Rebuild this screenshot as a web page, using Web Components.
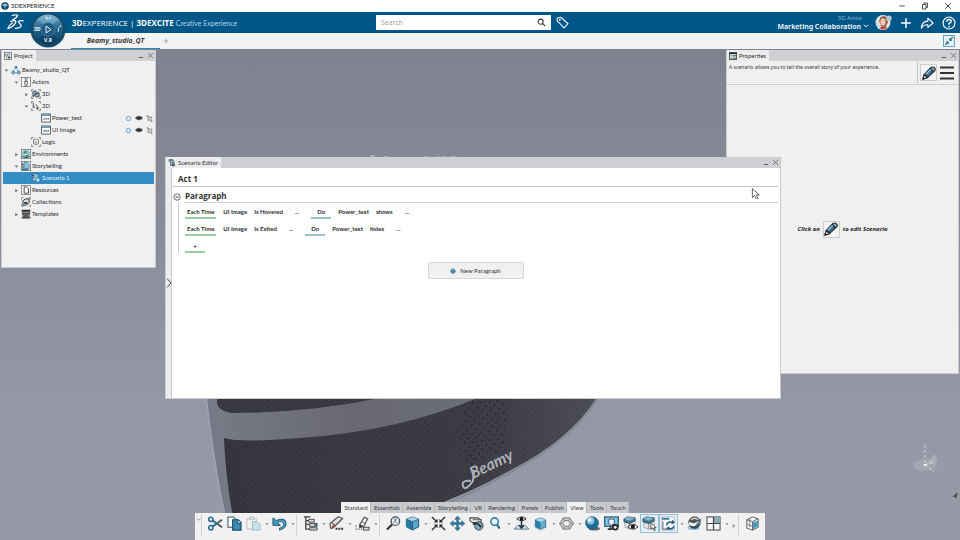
<!DOCTYPE html>
<html lang="en">
<head>
<meta charset="utf-8">
<title>3DEXPERIENCE</title>
<style>
html,body{margin:0;height:100%}
body{font-family:Lato,"Open Sans",sans-serif;font-size:6px;line-height:8px;color:#303133;overflow:hidden}
</style>
</head>
<body>
<studio-app></studio-app>
<script>
const ICONS = {
globe:'<circle cx="8" cy="8" r="7.5" fill="#0c3c5c"/><path d="M2 6Q8 1 14 6L12 9H4Z" fill="#5ba7d0"/><path d="M5 9l3 5 3-5z" fill="#2f7aa8"/><path d="M4 5h8M8 2v11" stroke="#d9eefa" stroke-width=".8"/>',
ds:'<g fill="none" stroke="#fff" stroke-width="1.2" stroke-linecap="round" stroke-linejoin="round"><path d="M5 1.200Q9.500 .2 10 1.300Q9.500 3.500 5.500 5.500M3.500 7Q8.800 5 8.200 7.800Q6.500 12 .8 13.800Q1.800 10.500 5 8.500"/><path d="M15.200 6.500Q11.200 5.600 10.700 7.300Q11.300 8.300 13.300 10.500Q14 13 8 13.500"/></g>',
search:'<circle cx="6.500" cy="6.500" r="4.500" fill="none" stroke="#333" stroke-width="1.800"/><path d="M10 10l4.500 4.500" stroke="#333" stroke-width="2.200"/>',
tag:'<path d="M1.500 6V2.500L6 1.500 14.800 9.500 10 14.500 1.500 6Z" fill="none" stroke="#e8f4fb" stroke-width="1.400" stroke-linejoin="round"/><circle cx="4.700" cy="4.700" r="1.200" fill="#e8f4fb"/>',
plus:'<path d="M8 1.500v13M1.500 8h13" stroke="currentColor" stroke-width="2"/>',
share:'<path d="M1.500 14Q2 6 9 5.800V2.500L15 8l-6 5V10Q4 9.500 1.500 14Z" fill="none" stroke="#fff" stroke-width="1.300" stroke-linejoin="round"/>',
help:'<circle cx="8" cy="8" r="6.800" fill="none" stroke="#fff" stroke-width="1.300"/><path d="M5.500 6.500Q5.500 4 8 4T10.500 6.300Q10.500 7.500 8 8.500V10" fill="none" stroke="#fff" stroke-width="1.600"/><circle cx="8" cy="12" r="1" fill="#fff"/>',
avatar:'<circle cx="7.500" cy="8" r="7" fill="#e8e4e2"/><path d="M4 7Q4 2 8.500 2T12 8L10 12H6Z" fill="#8a5646"/><ellipse cx="7.500" cy="7.500" rx="2.500" ry="3.400" fill="#f1c6b0"/><path d="M4 13.500Q7.500 10 11.500 12.800Q8 16 4 13.500" fill="#c8423a"/><path d="M2 4L5 14H3Q0 9 2 4" fill="#c5dce0"/><circle cx="13" cy="4" r="2.700" fill="#b9c7d2"/>',
min:'<path d="M2.500 8h11" stroke="currentColor" stroke-width="1.500"/>',
pmin:'<path d="M2 12h12" stroke="currentColor" stroke-width="2.500"/>',
restore:'<path d="M3 5h7v9H3zM6 5V2h7v9h-3" fill="none" stroke="currentColor" stroke-width="1.500"/>',
close:'<path d="M2.500 2.500l11 11m0-11l-11 11" stroke="currentColor" stroke-width="1.700"/>',
chev:'<path d="M2 5l6 5 6-5" fill="none" stroke="currentColor" stroke-width="2.200"/>',
right:'<path d="M5 1l6 7-6 7" fill="none" stroke="currentColor" stroke-width="1.400"/>',
down:'<path d="M2 5h12L8 12Z" fill="currentColor"/>',
play:'<path d="M4 2v12l9-6Z" fill="currentColor"/>',
shrink:'<rect x=".75" y=".75" width="14.500" height="14.500" fill="#e9f2f8" stroke="#5c9bc0" stroke-width="1.300"/><path d="M13 3L9.500 6.500M3 13l3.500-3.500" stroke="#155780" stroke-width="1.600"/><path d="M8.500 3.500v4h4zM3.500 8.500h4v4z" fill="#155780"/>',
project:'<rect x="1" y="1" width="14" height="14" fill="#fff" stroke="#555" stroke-width="1.300"/><path d="M3 4h4v4H3zM5 8v4h3" fill="none" stroke="#333"/><rect x="8" y="9" width="5" height="4" fill="#4a4a4a"/><path d="M8 4h5M8 6h5" stroke="#287fae" stroke-width="1.300"/>',
props:'<rect x=".7" y="1" width="14.600" height="14" fill="#e3eeee" stroke="#222" stroke-width="1.400"/><path d="M1 3h14" stroke="#222" stroke-width="2.500"/><path d="M3 7h2M3 10h2M3 13h2" stroke="#267b6c" stroke-width="1.800"/><path d="M7 7h7M7 10h7M7 13h7" stroke="#3c4444" stroke-width="1.300"/>',
script:'<path d="M2 1h8v3h2v9H5V5H2Z" fill="#a9c3ce" stroke="#3c4a53" stroke-width="1.200"/><path d="M4 3h5M7 7h4M7 10h4" stroke="#3c4a53" stroke-width="1.300"/><circle cx="11" cy="12" r="2.500" fill="#4f86a3" stroke="#333"/>',
root:'<path d="M8 3L3 12h10Z" fill="none" stroke="#6997b0" stroke-width="1"/><circle cx="8" cy="3.500" r="2" fill="#267da8"/><circle cx="3.500" cy="12" r="2.500" fill="#86b9cf" stroke="#246482"/><circle cx="12.500" cy="12" r="2.500" fill="#86b9cf" stroke="#246482"/>',
actor:'<rect x="1" y="1" width="14" height="14" fill="#f8f8f8" stroke="#555"/><circle cx="8" cy="4" r="1.700" fill="none" stroke="#333"/><path d="M6 7h4v4L9 14H7L6 11Z" fill="none" stroke="#333" stroke-width="1.200"/>',
d3:'<path d="M1 4V1h3M12 1h3v3M1 12v3h3M12 15h3v-3" fill="none" stroke="#444"/><path d="M3 12V4l5-1v5zM8 8l5-2v6l-4 1-3-2" fill="#8fb0c0" stroke="#2c3a42" stroke-width="1.200"/><path d="M3 13L12 4" stroke="#222"/>',
d2:'<path d="M1 4V1h3M12 1h3v3M1 12v3h3M12 15h3v-3" fill="none" stroke="#444"/><path d="M3.500 3v8l3-2M7 5l5 5-3 1 2 3M8 12h4" fill="#dcdcdc" stroke="#333" stroke-width="1.200"/>',
text:'<rect x="1" y="1.500" width="14" height="13" fill="#f8fafb" stroke="#3b4a52" stroke-width="1.300"/><path d="M1 3.500h14" stroke="#4781a1" stroke-width="2"/><path d="M4 9.500h2M7.300 9.500h2M10.600 9.500h2" stroke="#333" stroke-width="2"/>',
logic:'<path d="M1 4V1h3M12 1h3v3M1 12v3h3M12 15h3v-3" fill="none" stroke="#444"/><path d="M4 4.500l3-1.500 5 1.500v6l-3 2-5-2ZM7 6v3l3 1" fill="#eee" stroke="#444"/>',
env:'<rect x=".5" y=".5" width="15" height="15" fill="#e3eff2" stroke="#555"/><circle cx="8" cy="7.500" r="6" fill="#7fbbd4"/><path d="M4 4l4-1 1 3-4 2zM8 9l5-1-2 4-4 1z" fill="#4b8a4d"/><path d="M1.500 12q6.500 4 13 0" fill="none" stroke="#25515f" stroke-width="1.500"/><path d="M4 8.500h7" stroke="#e6f8ee" stroke-width="1.500"/>',
story:'<rect x=".5" y=".5" width="15" height="15" fill="#eef4f6" stroke="#555"/><path d="M5 2h5l3 3v7H5Z" fill="#8fc3dc" stroke="#246989"/><path d="M3 3v11h9" fill="none" stroke="#174860" stroke-width="1.700"/>',
scene:'<path d="M2 1h8l2 3v9H2Z" fill="#8bbcd6" stroke="#245f82"/><path d="M2 4h3M2 7h3" stroke="#153f56" stroke-width="1.500"/><circle cx="11" cy="11" r="3.500" fill="#9cc8df" stroke="#3e7593"/><path d="M10 9l3 2-3 2z" fill="#fff"/>',
res:'<rect x=".8" y=".8" width="14.400" height="14.400" fill="#f8f8f8" stroke="#555"/><path d="M5 3h4l3 3v7H5Z" fill="none" stroke="#333" stroke-width="1.300"/>',
coll:'<path d="M1 4V1h3M12 1h3v3M1 12v3h3M12 15h3v-3" fill="none" stroke="#555"/><path d="M3 6l4-3h6v6l-4 4H3Z" fill="#d4dbdc" stroke="#222" stroke-width="1.400"/><path d="M5 8h5v3H5z" fill="#243b45"/>',
templ:'<path d="M1 2h14M1 14h14" stroke="#333" stroke-width="2"/><path d="M2 4h12v3H2zM3 8h10v5H3z" fill="#aaa" stroke="#222" stroke-width="1.300"/><path d="M5 11h6" stroke="#111" stroke-width="1.500"/>',
ring:'<circle cx="8" cy="8" r="5" fill="#dff0fa" stroke="#3f91c1" stroke-width="1.700"/>',
eye:'<path d="M0 8Q8-1 16 8Q8 17 0 8Z" fill="#3e3e3e"/><circle cx="8" cy="8" r="3.800" fill="#aaa"/><circle cx="8" cy="8" r="3" fill="#111"/>',
arrowc:'<path d="M1 2h4v3h9l-3 3 3 6-3 1-3-5-3 3V4" fill="#fff" stroke="#444" stroke-width="1.400"/>',
pencil:'<path d="M1 15l1.200-5L10.500 1.500Q13 .5 14.500 2T14.500 5.500L6 13.500Z" fill="#2e7196" stroke="#24282c" stroke-width="1.200"/><path d="M1 15l1.200-5 3.800 3.500Z" fill="#d8d8d8" stroke="#24282c"/><path d="M3.500 9.500l3.500 3.500M9 3l4 4" stroke="#1c2429" stroke-width="1.200"/><path d="M4.500 9.500l5.500-5.500" stroke="#8fc3dd" stroke-width="1.800"/><path d="M10.500 2.500l3 3 1-2.500-2-1.500z" fill="#999"/><path d="M1 15l.600-2.500 2 1.800z" fill="#111"/>',
menu:'<path d="M1 2.500h14M1 8h14M1 13.500h14" stroke="#333" stroke-width="2"/>',
minus:'<circle cx="8" cy="8" r="6.500" fill="#fff" stroke="#333" stroke-width="1.400"/><path d="M4.500 8h7" stroke="#222" stroke-width="1.600"/>',
add:'<path d="M5 1h6v4h4v6h-4v4H5v-4H1V5h4Z" fill="#4d83a1"/><path d="M3 3h10v10H3z" fill="#4d83a1"/><path d="M6 2h4v4H6z" fill="#80adc3"/>',
cursor:'<path d="M2 1v13l3-3 3 5 2-1-2-5h4Z" fill="#fff" stroke="#333" stroke-width="1.100"/>',
cut:'<path d="M4.500 4.500L15 12M4.500 11.500L15 4" stroke="#555" stroke-width="2"/><path d="M5 5l5 3.500M5 11l5-3.500" stroke="#2e789f" stroke-width="2"/><circle cx="3" cy="3.500" r="2.300" fill="none" stroke="#286b91" stroke-width="1.600"/><circle cx="3" cy="12.500" r="2.300" fill="none" stroke="#286b91" stroke-width="1.600"/>',
copy:'<path d="M1 1h6l3 3v8H1Z" fill="#fff" stroke="#33566a" stroke-width="1.100"/><path d="M6 4h6l3 3v8H6Z" fill="#3b89af" stroke="#184e6c" stroke-width="1.200"/><path d="M11 4v4h4" fill="#b6dbea" stroke="#184e6c"/>',
paste:'<path d="M1 3h10v11H1Z" fill="#f2f3f3" stroke="#bbb"/><path d="M4 1h4v3H4z" fill="#e5e5e5" stroke="#bbb"/><path d="M7 6h5l3 3v6H7Z" fill="#c6e0e8" stroke="#9fbcc6"/>',
undo:'<path d="M1 2v8h8L6 7.200Q10 4 12 7.500T8 13v2Q16 13 15 7T4.500 4.800Z" fill="#4d9ac0" stroke="#1f5877" stroke-width="1"/>',
tree:'<path d="M1 1h7M3 1v13h5M3 5h4M3 9h4" fill="none" stroke="#444" stroke-width="1.400"/><path d="M6 3.500h6v3H6zM7 8h8v3H7zM7 12.500h8v2.500H7z" fill="#ddd" stroke="#444"/><path d="M12 9.500h3" stroke="#2e7196" stroke-width="2"/>',
erase:'<path d="M1 8L10 .8l4.500 1.700L6 11 4 13H1.500Z" fill="#e3e3e3" stroke="#555" stroke-width="1.200"/><path d="M3 7.500l4 3M6 11l8-8" stroke="#555" stroke-width="1.200"/><path d="M3 13l2-3" stroke="#a33" stroke-width="1.500"/><path d="M7 13.500h2M10 13.500h2M13 13.500h2" stroke="#333" stroke-width="2.200"/>',
pen:'<path d="M5 9L10 1l3.500 2-4 8-4 1Z" fill="#eee" stroke="#555" stroke-width="1.200"/><path d="M5 9l4 2-4 1.500zM7 6l4 2" fill="#333" stroke="#555"/><path d="M1 14h8M1 10v3" stroke="#444" stroke-dasharray="1.500 1"/><rect x="9" y="12" width="6" height="3" fill="#ddd" stroke="#444"/>',
zoomfit:'<circle cx="10" cy="5.500" r="4.500" fill="#eef3f5" stroke="#444" stroke-width="1.300"/><path d="M6.500 9l-5.500 5.500" stroke="#333" stroke-width="2.300"/><path d="M7.500 8L10 4.500M8.500 3.500h3M10 4v2l2 2" fill="none" stroke="#45788f"/>',
cube:'<path d="M8 1l6.500 2.500v8L8 15l-6.500-3.500v-8Z" fill="#5aa8cf" stroke="#1c506e"/><path d="M1.500 3.500L8 6v9l-6.500-3.500Z" fill="#287ba7"/><path d="M1.500 3.500L8 1l6.500 2.500L8 6Z" fill="#a9d6eb"/><path d="M8 6v9M1.500 3.500L8 6l6.500-2.500" fill="none" stroke="#1c506e" stroke-width=".8"/>',
cubes:'<path d="M1 11l7 4 7-4v1l-7 4-7-4z" fill="#bbc5ca"/><path d="M8 2l5.500 2v7.500L8 14l-5.500-2.500V4Z" fill="#65acd0" stroke="#266484" stroke-width=".8"/><path d="M2.500 4L8 6.500V14l-5.500-2.500Z" fill="#2b7aa4"/><path d="M2.500 4L8 2l5.500 2L8 6.500Z" fill="#a9d6eb"/>',
fit:'<path d="M1 1l5 5M15 1l-5 5M1 15l5-5M15 15l-5-5" stroke="#292929" stroke-width="1.500"/><path d="M7 3v4H3zM9 3v4h4zM7 13V9H3zM9 13V9h4z" fill="#292929"/>',
move:'<path d="M8 0l3 3.500H9V7h3.500V5L16 8l-3.500 3V9H9v3.500h2L8 16l-3-3.500h2V9H3.500v2L0 8l3.500-3v2H7V3.500H5Z" fill="#347da2" stroke="#1d5472" stroke-width=".5"/>',
orbit:'<path d="M1 2h8l4 2v3H4L1 5Z" fill="#f2f2f2" stroke="#444" stroke-width="1.100"/><path d="M4 4h9" stroke="#444"/><circle cx="10.500" cy="10.500" r="4.500" fill="#7badc4" stroke="#333"/><path d="M4 9q5-3 9 3M10 9l3 3" fill="none" stroke="#222" stroke-width="1.500"/>',
mag:'<circle cx="7" cy="6" r="4" fill="#eaf5fa" stroke="#3582a8" stroke-width="1.700"/><path d="M9.500 9l3 4.500" stroke="#2b6d90" stroke-width="2.200"/>',
walk:'<path d="M0 14l4-4h8l4 4Z" fill="#c7dfeb" stroke="#527f94"/><path d="M3 3Q8-1 13 3Q8 7 3 3" fill="#fff" stroke="#222"/><circle cx="8" cy="3" r="2" fill="#111"/><path d="M8 5v8M5.500 10L8 13l2.500-3" fill="none" stroke="#333" stroke-width="1.600"/>',
hex:'<path d="M4.500 2h7l4 6-4 6h-7l-4-6Z" fill="#ccc" stroke="#777"/><path d="M6 5h4l2 3-2 3H6L4 8Z" fill="#f2f2f2" stroke="#777"/><path d="M4.500 2L6 5M11.500 2L10 5M.500 8H4M12 8h3.500M4.500 14L6 11M11.500 14L10 11" stroke="#888"/>',
ball:'<ellipse cx="10" cy="13.500" rx="6" ry="2" fill="#666"/><circle cx="7.500" cy="7.500" r="6.800" fill="#1f7099" stroke="#174d69" stroke-width=".7"/><circle cx="6" cy="5" r="4" fill="#8bc4df"/><circle cx="5" cy="4" r="2" fill="#eef9fd"/>',
screen:'<rect x=".7" y="1" width="14.600" height="10" fill="#7fc0dc" stroke="#27617e" stroke-width="1.300"/><path d="M5 4l3-1 3 1v4l-3 2-3-2Z" fill="#e7f4f8" stroke="#557"/><path d="M4 14h5M7 11v3" stroke="#333" stroke-width="1.700"/><circle cx="12" cy="12" r="2.600" fill="#eee" stroke="#222" stroke-width="1.800"/>',
boxeye:'<path d="M2 5v7l5 2V7ZM7 7l6-2v8l-6 1z" fill="#e4e4e4" stroke="#999" stroke-width=".8"/><path d="M1 3l4-2 8 1v3L7 8 1 6Z" fill="#407c9c" stroke="#264c60"/><path d="M1 3l6 2 6-3-8-1z" fill="#8ab6cc"/><path d="M5 11.500q5-5 11 0-5 5-11 0" fill="#fff" stroke="#222"/><circle cx="10.500" cy="11.500" r="2.200" fill="#111"/>',
boxsel:'<path d="M2 5v7l5 2V7ZM7 7l6-2v8l-6 1z" fill="#e4e4e4" stroke="#999" stroke-width=".8"/><path d="M1 3l4-2 8 1v3L7 8 1 6Z" fill="#407c9c" stroke="#264c60"/><path d="M1 3l6 2 6-3-8-1z" fill="#8ab6cc"/><path d="M9.500 7v7l2-1.500L13 15.500l1-.5-1-2.500H15Z" fill="#fff" stroke="#222" stroke-width=".8"/>',
frame:'<path d="M1 15V1h13v14Z" fill="#fff" stroke="#99a" stroke-width=".7"/><path d="M1 2h8v2H1z" fill="#337fa6"/><path d="M2 6v8h6" fill="none" stroke="#555"/><path d="M6 10q1-5 7-3M14 11q-2 4-6 2" fill="none" stroke="#265a77" stroke-width="1.800"/><path d="M12 4l3 3-4 2zM9 11v4l-4-2z" fill="#265a77"/>',
render:'<ellipse cx="7" cy="12.500" rx="6.500" ry="2.500" fill="#8dbbd2"/><circle cx="8" cy="7" r="6" fill="#555" stroke="#222"/><path d="M4 4q4-3 8 0" stroke="#ddd" stroke-width="1.500" fill="none"/><path d="M2 7.500q6 4 11-1" fill="none" stroke="#e9f3f7" stroke-width="3"/><path d="M15 3l-4 8-2 1 1-3z" fill="#3c87ad" stroke="#245670" stroke-width=".6"/>',
quad:'<rect x="1" y="1" width="14" height="14" fill="#f8f8f8" stroke="#555" stroke-width="1.200"/><path d="M8 1h7v7H8z" fill="#8ea9b6"/><path d="M8 1v14M1 8h14" stroke="#444" stroke-width="1.300"/>',
wire:'<path d="M2 4l6-3 6 2v9l-6 3-6-2ZM2 4l6 2 6-3M8 6v9" fill="#fff" stroke="#555"/><path d="M8 7l6-2v6l-6 3Z" fill="#4d9abd"/><path d="M5 3v9M2 9l6 2" stroke="#777"/>'
};
function define(name, render){
  customElements.define(name, class extends HTMLElement{
    constructor(){
      super();
      this.attachShadow({mode:'open'});
    }
    connectedCallback(){
      const t = document.createElement('template');
      t.innerHTML = render(this);
      this.shadowRoot.replaceChildren(t.content.cloneNode(true));
    }
  });
}
const icon = (name, size) => `<ds-icon name="${name}" style="--s:${size}px"></ds-icon>`;
const BTN = 'button{font:inherit;color:inherit;background:none;border:0;padding:0;margin:0;display:flex;align-items:center;justify-content:center}';

define('ds-icon', e => `<style>:host{display:block;flex:none;width:var(--s);height:var(--s)}svg{display:block;width:100%;height:100%}</style>
<svg viewBox="0 0 16 16" aria-hidden="true">${ICONS[e.getAttribute('name')]}</svg>`);

define('title-bar', () => `<style>
:host{display:flex;align-items:center;height:12px;background:#fff;padding:0 8px 0 1px;gap:2px;color:#222;font-size:6px}
b{flex:1;font-weight:400}nav{display:flex;gap:15px}${BTN}</style>
${icon('globe',8)}<b>3DEXPERIENCE</b>
<nav><button aria-label="Minimize">${icon('min',8)}</button><button aria-label="Restore">${icon('restore',8)}</button><button aria-label="Close">${icon('close',8)}</button></nav>`);

define('app-header', () => `<style>
:host{display:grid;grid-template-columns:376fr 175fr 409fr;align-items:center;height:21px;background:#005686;color:#fff;position:relative;font-family:"Open Sans",sans-serif;font-size:8px;line-height:10px}
.brand{display:flex;align-items:center;gap:48px;padding-left:7px}
h1{margin:0;font:inherit;white-space:nowrap}h1 span{color:#b4d5e8;font-family:Lato,sans-serif;font-size:7px}
form{display:flex;align-items:center;background:#fff;height:15px;padding:0 5px;margin:0}
input{flex:1;min-width:0;border:0;outline:0;padding:0;font:inherit;font-family:"Open Sans",sans-serif;font-size:7px;color:#444;background:none}
input::placeholder{color:#999}
.right{display:flex;align-items:center;padding:0 4px 0 5px}
.user{margin-left:auto;margin-right:6px;display:grid;justify-items:end}
.user small{font-size:6px;line-height:7px;color:#91bed6;padding-right:7px}
.user button{font-family:"Noto Sans",sans-serif;font-size:7px;line-height:9px;font-weight:600;gap:2px}
.acts{display:flex;gap:8px;align-items:center}
compass-rose{position:absolute;left:30px;top:0}
${BTN}</style>
<div class="brand">${icon('ds',17)}<h1><b>3D</b>EXPERIENCE | <b>3DEXCITE</b> <span>Creative Experience</span></h1></div>
<form><input type="search" placeholder="Search" aria-label="Search"><button type="button" aria-label="Run search">${icon('search',9)}</button></form>
<div class="right"><button aria-label="Tags">${icon('tag',13)}</button>
<div class="user"><small>3D Artist</small><button>Marketing Collaboration ${icon('chev',6)}</button></div>
<div class="acts"><button aria-label="Profile">${icon('avatar',17)}</button><button aria-label="Add">${icon('plus',12)}</button><button aria-label="Share">${icon('share',14)}</button><button aria-label="Help">${icon('help',14)}</button></div></div>
<compass-rose></compass-rose>`);

define('compass-rose', () => `<style>:host{display:block;width:36px;height:36px;z-index:3}svg{display:block}text{font:700 5px "Open Sans",sans-serif;fill:#fff}</style>
<svg width="36" height="36" viewBox="0 0 36 36" role="img" aria-label="Compass"><defs><linearGradient id="g" x2="0" y2="1"><stop stop-color="#68a4c7"/><stop offset=".5" stop-color="#205f88"/><stop offset="1" stop-color="#0c4265"/></linearGradient></defs>
<circle cx="18" cy="18" r="17.500" fill="#164a6b"/><circle cx="18" cy="17.500" r="15" fill="url(#g)"/>
<path d="M18 17L7 7Q18-2 29 7Z" fill="#8dbbd5" opacity=".5"/><path d="M18 18L8 28Q18 37 28 28Z" fill="#063556" opacity=".5"/>
<circle cx="18" cy="17.500" r="7" fill="#1d5b82" stroke="#5d99ba" stroke-width=".5"/><path d="M16 14v7l5-3.500Z" fill="none" stroke="#fff" stroke-width=".9"/>
<path d="M15 6l2-1v3M19 8l1-3 1 1M28 20l1-5M30 15l1-2" stroke="#fff" fill="none" stroke-width=".8"/>
<text x="4" y="19">3D</text><text x="14" y="30">V.R</text></svg>`);

define('doc-tabs', () => `<style>
:host{display:flex;align-items:stretch;height:16px;background:#f3f4f6;padding:0 5px 0 71px}
a{box-sizing:border-box;width:89px;display:flex;align-items:center;justify-content:center;text-decoration:none;color:#3a3a3c;font:italic 700 7px/10px "Open Sans",sans-serif;border-bottom:1px solid #2f85b8;padding-top:1px}
.p{margin-left:3px;color:#999}.e{margin-left:auto}${BTN}</style>
<a href="#doc">Beamy_studio_QT</a><button class="p" aria-label="New tab">${icon('plus',6)}</button><button class="e" aria-label="Collapse">${icon('shrink',12)}</button>`);

define('scene-view', () => `<style>:host{display:block;position:absolute;inset:0}svg{display:block;width:100%;height:100%}text{font:italic 700 16px Lato,sans-serif;fill:#aeb0b8}</style>
<svg viewBox="0 49 960 491" preserveAspectRatio="xMidYMax slice" role="img" aria-label="Beamy speaker in the studio"><defs>
<linearGradient id="bg" x2="0" y2="1"><stop stop-color="#80818e"/><stop offset=".25" stop-color="#868896"/><stop offset=".72" stop-color="#9498a6"/><stop offset="1" stop-color="#9799a6"/></linearGradient>
<linearGradient id="band"><stop stop-color="#777985"/><stop offset=".5" stop-color="#676873"/><stop offset="1" stop-color="#6c6e78"/></linearGradient>
<linearGradient id="sh"><stop stop-color="#25262c" stop-opacity=".2"/><stop offset=".6" stop-color="#4a4b53" stop-opacity=".1"/><stop offset="1" stop-color="#75777f" stop-opacity=".35"/></linearGradient>
<pattern id="m" width="3" height="3" patternUnits="userSpaceOnUse" patternTransform="rotate(28)"><rect width="3" height="3" fill="#33343b"/><circle cx="1.500" cy="1.500" r=".8" fill="#4c4d56"/></pattern>
<pattern id="h" width="6" height="6" patternUnits="userSpaceOnUse" patternTransform="rotate(38)"><circle cx="3" cy="3" r="1.200" fill="#202127"/></pattern></defs>
<rect y="49" width="960" height="491" fill="url(#bg)"/>
<path d="M370 156h5M384 157h4M424 157h5M437 157h3M442 157h4M450 157h7" stroke="#c4c6cd" stroke-width="1"/>
<path d="M206 395Q212 450 222 502L231 540H260V395Z" fill="#777987"/><path d="M206 395Q212 450 222 502L231 540" fill="none" stroke="#9fa2b3" stroke-width="1.500"/>
<path d="M217 395H420L378 399Q310 414 230 413Q218 410 217 404Z" fill="url(#m)"/>
<path d="M217 404Q220 413 232 413Q310 413 385 397H490Q400 432 300 439Q240 443 224 438Q219 420 217 404" fill="url(#band)"/>
<path d="M224 438Q240 443 300 438Q400 431 480 397H597Q571 440 507 472Q430 516 310 540H238Q226 490 224 438Z" fill="url(#m)"/>
<path d="M224 438Q240 443 300 438Q400 431 480 397H597Q571 440 507 472Q430 516 310 540H238Q226 490 224 438Z" fill="url(#sh)"/>
<path d="M465 403L506 397V448L468 468L460 440Z" fill="url(#h)" opacity=".6"/>
<path d="M598 398Q571 441 507 474Q470 495 430 510" fill="none" stroke="#858794" stroke-width="2"/>
<path d="M471 481Q461 480 463 486T473 481L474 470" fill="none" stroke="#aeb0b8" stroke-width="2"/>
<text x="473" y="479" transform="rotate(-26 473 479)">Beamy</text>
<ellipse cx="925" cy="465" rx="12" ry="6" fill="#afb1ba" opacity=".6"/><path d="M925 465l10-11 3 8z" fill="#b8bac2" opacity=".6"/><path d="M925 445v20M925 465l10-3M925 465l9 7" stroke="#dedfe3" stroke-width=".8" stroke-dasharray="3 2"/><rect x="924" y="464" width="2" height="2" fill="#fff"/>
<path d="M951 497l8-6-3 9-2-3z" fill="#4b4d57" stroke="#c3c4ca" stroke-width=".5"/>
</svg>`);

define('dock-panel', e => `<style>
:host{position:absolute;display:flex;flex-direction:column;box-sizing:border-box;background:#f0f0f1;border:1px solid #cacbce;border-top:0}
header{display:flex;align-items:center;height:11px;background:#cfd0d3;flex:none;padding-right:1px;gap:3px;color:#55565a}
h2{margin:0 auto 0 0;font:inherit;display:flex;align-items:center;gap:2px;height:11px;padding:0 3px 0 2px;background:#ededee;color:#303133}
.body{flex:1;min-height:0;display:flex;flex-direction:column;background:#f0f0f1}${BTN}</style>
<header><h2>${icon(e.getAttribute('icon'),8)}${e.getAttribute('label')}</h2><button aria-label="Minimize panel">${icon('pmin',6)}</button><button aria-label="Close panel">${icon('close',7)}</button></header>
<div class="body"><slot></slot></div>`);

define('tree-item', e => {
  const lv = +e.getAttribute('level'), st = e.getAttribute('state');
  return `<style>:host{display:flex;align-items:center;height:12px;margin:0 1px;padding-left:${lv*10+1}px;color:#2c2c2e;white-space:nowrap}
:host([selected]){background:#348dc5;color:#e4f3fc}.c{width:7px;color:#777;flex:none}.a{margin-left:auto;display:flex;gap:3px;padding-right:1px}span{padding-left:1px}${BTN}</style>
<div class="c">${st?`<button aria-label="Toggle">${icon(st==='open'?'down':'play',5)}</button>`:''}</div>${icon(e.getAttribute('icon'),10)}<span><slot></slot></span>
${e.hasAttribute('actions')?`<div class="a"><button aria-label="State">${icon('ring',7)}</button><button aria-label="Visibility">${icon('eye',8)}</button><button aria-label="Selectable">${icon('arrowc',7)}</button></div>`:''}`;
});

define('project-tree', () => `<style>:host{display:block;padding-top:3px}</style>`+[
[0,'open','root','Beamy_studio_QT'],[1,'open','actor','Actors'],[2,'shut','d3','3D'],[2,'open','d2','2D'],[3,'','text','Power_text','actions'],[3,'','text','UI Image','actions'],[2,'','logic','Logic'],[1,'shut','env','Environments'],[1,'open','story','Storytelling'],[2,'','scene','Scenario 1','selected'],[1,'shut','res','Resources'],[1,'','coll','Collections'],[1,'shut','templ','Templates']
].map(r=>`<tree-item level="${r[0]}" state="${r[1]}" icon="${r[2]}" ${r[4]||''}>${r[3]}</tree-item>`).join(''));

define('properties-view', () => `<style>
:host{display:flex;flex-direction:column;flex:1}
.top{display:flex;height:24px;border-bottom:1px solid #cfcfd1;box-sizing:border-box}
p{margin:0 auto 0 0;padding:2px;font:5px/8px "Noto Sans",sans-serif;color:#333;white-space:nowrap}
.b{display:flex;align-items:center;gap:2px;border-left:1px solid #c4c4c6;margin:1px 3px 1px 0;padding-left:2px}
.msg{flex:1;display:flex;align-items:center;justify-content:center;gap:3px;font:italic 700 6px/8px "Open Sans",sans-serif;color:#222}
${BTN}
button.pen{box-sizing:border-box;width:17px;height:17px;border:1px solid #ccc;background:#f4f4f4}</style>
<div class="top"><p>A scenario allows you to tell the overall story of your experience.</p><div class="b"><button class="pen" aria-label="Edit">${icon('pencil',14)}</button><button aria-label="Menu">${icon('menu',16)}</button></div></div>
<div class="msg">Click on <button class="pen" aria-label="Edit scenario">${icon('pencil',14)}</button> to edit Scenario</div>`);

define('scenario-row', () => `<style>:host{display:flex;align-items:flex-start;height:17px;gap:7px}</style><slot></slot>`);
define('scenario-cell', () => `<style>:host{display:block}:host([more]){padding:0 5px}${BTN}
button{font-weight:700;line-height:10px;height:12px;white-space:nowrap;box-sizing:border-box;border-bottom:2px solid transparent}
:host([kind]) button{padding:0 2px;border-color:#9ccca6;min-width:20px}
:host([kind=do]) button{border-color:#9cbfce}</style><button><slot></slot></button>`);

define('scenario-view', () => `<style>
:host{flex:1;display:flex;color:#303134}
${BTN}
.side{width:5px;background:#ececee;border-right:1px solid #c8c9cc;display:flex;align-items:center;justify-content:center}
main{flex:1;background:#fff;padding:5px 2px 0 1px}
h3,h4{margin:0;font:700 8px/12px "Open Sans",sans-serif}
h3{padding:0 5px;border-bottom:1px solid #c3c4c6;height:13px}
h4{display:flex;align-items:center;margin-top:3px;gap:4px}
h4 span{flex:1;border-bottom:1px solid #d0d1d3}
.rows{margin:0 0 0 5px;border-left:1px solid #c9cacc;padding:4px 0 0 6px;height:46px;color:#2b2c30}
.new{display:flex;justify-content:center;margin-top:9px}
.new button{box-sizing:border-box;width:96px;height:17px;gap:4px;border:1px solid #d6d7d9;border-radius:2px;background:#f0f0f1}</style>
<div class="side"><button aria-label="Expand side panel">${icon('right',10)}</button></div>
<main><h3>Act 1</h3><h4><button aria-label="Collapse paragraph">${icon('minus',8)}</button><span>Paragraph</span></h4>
<div class="rows">
<scenario-row><scenario-cell kind="when">Each Time</scenario-cell><scenario-cell>UI Image</scenario-cell><scenario-cell>Is Hovered</scenario-cell><scenario-cell more>...</scenario-cell><scenario-cell kind="do">Do</scenario-cell><scenario-cell>Power_text</scenario-cell><scenario-cell>shows</scenario-cell><scenario-cell more>...</scenario-cell></scenario-row>
<scenario-row><scenario-cell kind="when">Each Time</scenario-cell><scenario-cell>UI Image</scenario-cell><scenario-cell>Is Exited</scenario-cell><scenario-cell more>...</scenario-cell><scenario-cell kind="do">Do</scenario-cell><scenario-cell>Power_text</scenario-cell><scenario-cell>hides</scenario-cell><scenario-cell more>...</scenario-cell></scenario-row>
<scenario-row><scenario-cell kind="when">+</scenario-cell></scenario-row></div>
<div class="new"><button>${icon('add',6)}New Paragraph</button></div></main>`);

define('tool-button', e => `<style>:host{display:flex;align-items:center}${BTN}.m{width:19px;height:19px}.d{width:7px;height:15px;color:#777}
:host([on]) .m{background:#e4eff5;box-shadow:inset 0 0 0 1px #93bfd5}</style>
<button class="m" aria-label="${e.getAttribute('icon')}">${icon(e.getAttribute('icon'),15)}</button>${e.hasAttribute('drop')?`<button class="d" aria-label="More">${icon('down',4)}</button>`:''}`);

define('action-bar', () => `<style>
:host{position:absolute;bottom:0;left:50%;transform:translateX(-50%);display:block}
nav{display:flex;margin-left:146px;margin-right:136px;height:11px}
nav a{flex:auto;display:flex;align-items:center;justify-content:center;padding:0 3px;background:#c9cacd;color:#38393c;text-decoration:none;box-shadow:inset -1px 0 #b6b7ba}
nav a[on]{background:#f1f1f2}
.bar{display:flex;align-items:flex-start;height:25px;padding:1px 3px 1px 0;background:#f1f1f2}${BTN}
.w{width:6px;height:10px;color:#777}.g{width:8px;height:24px;color:#aaa}i{width:5px;height:22px;box-sizing:border-box;border-left:1px solid #d0d1d3}</style>
<nav>${['Standard','Essentials','Assemble','Storytelling','VR','Rendering','Panels','Publish','View','Tools','Touch'].map(t=>`<a href="#${t}"${t==='Standard'||t==='View'?' on':''}>${t}</a>`).join('')}</nav>
<div class="bar"><button class="w" aria-label="Fold bar">${icon('chev',5)}</button><i></i>${
['cut','copy','paste*','undo*','|','tree*','erase*','pen*','|','zoomfit','cube*','fit','move','orbit','mag*','walk','cubes*','hex*','ball','screen','boxeye','boxsel!','frame!*','render','quad*','>','|','wire'].map(n=>n==='|'?'<i></i>':n==='>'?`<button class="g" aria-label="Next tools">${icon('play',6)}</button>`:`<tool-button icon="${n.replace(/[*!]/g,'')}"${n.includes('*')?' drop':''}${n.includes('!')?' on':''}></tool-button>`).join('')}</div>`);

define('studio-app', () => `<style>
:host{display:flex;flex-direction:column;height:100vh}
.stage{position:relative;flex:1;min-height:0;overflow:hidden;display:grid;grid-template-columns:156fr 570fr 234fr}
.project{top:1px;left:1px;right:0;bottom:272px;grid-column:1/2}
.props{top:1px;left:0;right:1px;bottom:166px;grid-column:3/4}
.editor{top:108px;left:165px;right:179px;bottom:141px}
.cur{position:absolute;left:751px;top:139px}</style>
<title-bar></title-bar><app-header></app-header><doc-tabs></doc-tabs>
<div class="stage"><scene-view></scene-view>
<dock-panel class="project" icon="project" label="Project"><project-tree></project-tree></dock-panel>
<dock-panel class="props" icon="props" label="Properties"><properties-view></properties-view></dock-panel>
<dock-panel class="editor" icon="script" label="Scenario Editor"><scenario-view></scenario-view></dock-panel>
<action-bar></action-bar><div class="cur">${icon('cursor',11)}</div></div>`);
</script>
</body>
</html>
